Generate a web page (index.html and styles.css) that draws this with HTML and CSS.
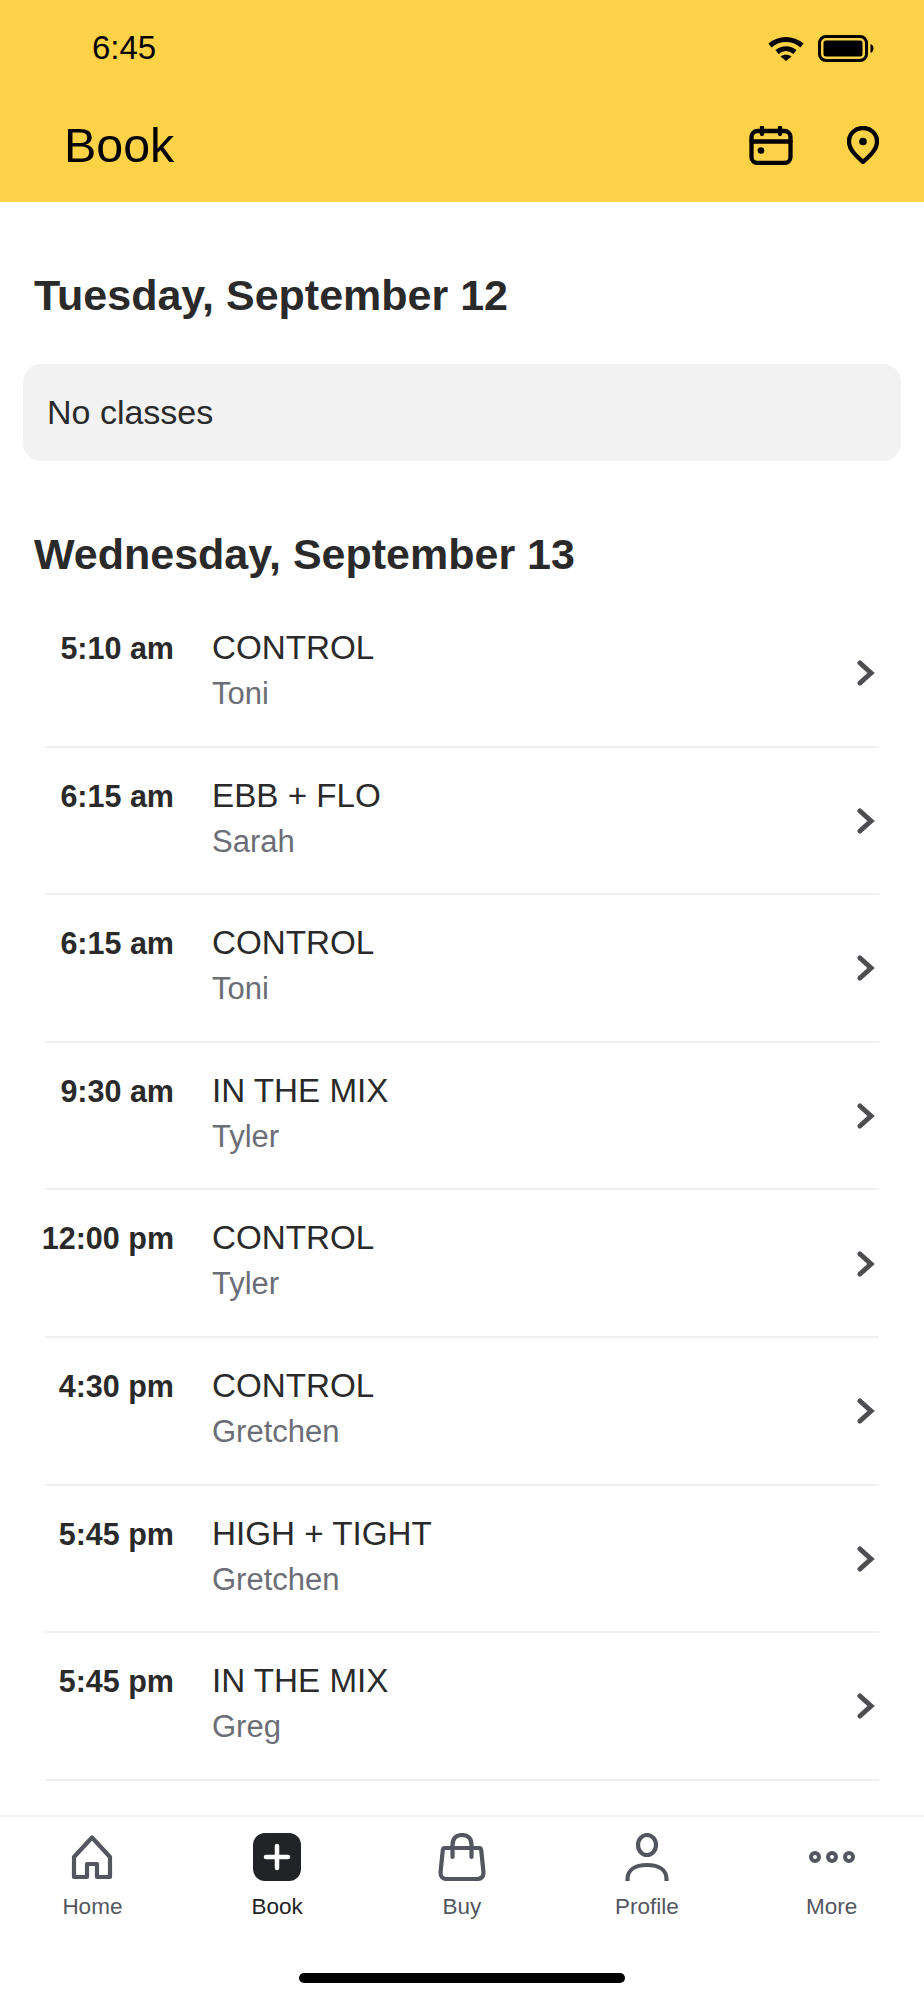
FILE: index.html
```html
<!DOCTYPE html>
<html lang="en">
<head>
<meta charset="utf-8">
<title>Book</title>
<link rel="stylesheet" href="styles.css">
</head>
<body>
<div class="app">
  <header class="header">
    <div class="status">
      <span class="clock">6:45</span>
      <div class="status-icons">
        <svg class="wifi" viewBox="0 0 36 25"><path d="M2 9.500C11.500 1.500 24.500 1.500 34 9.500" class="wifi-arc"/><path d="M9 16C14.500 11.500 21.500 11.500 27 16" class="wifi-arc"/><path d="M12.500 20.500C15.500 18 20.500 18 23.500 20.500L18 25Z" class="wifi-dot"/></svg>
        <svg class="battery" viewBox="0 0 58 27"><rect x="1.500" y="1.500" width="47" height="24" rx="6.500" class="bat-shell"/><rect x="5.500" y="5.500" width="39" height="16" rx="2.500" class="bat-fill"/><path d="M52.500 9C56.500 10 56.500 17 52.500 18Z" class="bat-fill"/></svg>
      </div>
    </div>
    <div class="nav">
      <h1 class="nav-title">Book</h1>
      <div class="nav-icons">
        <svg class="cal" viewBox="0 0 44 39"><rect x="2.500" y="5" width="39" height="32" rx="6" class="ico-black"/><path d="M2.500 15.500H41.500M13 1.500V8M31 1.500V8" class="ico-black"/><circle cx="12" cy="24.500" r="3.300" class="dot-black"/></svg>
        <svg class="pin" viewBox="0 0 32 38"><path d="M16 36C10 30.500 2 24 2 15.500C2 7.500 8.500 2 16 2C23.500 2 30 7.500 30 15.500C30 24 22 30.500 16 36Z" class="ico-black"/><circle cx="16" cy="15.500" r="3.800" class="dot-black"/></svg>
      </div>
    </div>
  </header>

  <main class="content">
    <h2 class="day day-first">Tuesday, September 12</h2>
    <div class="empty">No classes</div>
    <h2 class="day day-second">Wednesday, September 13</h2>
    <ul class="list">
      <li class="row"><span class="time">5:10 am</span><div class="info"><span class="name">CONTROL</span><span class="coach">Toni</span></div><svg class="chev" viewBox="0 0 18 26"><path d="M3 3L14 13L3 23"/></svg></li>
      <li class="row"><span class="time">6:15 am</span><div class="info"><span class="name">EBB + FLO</span><span class="coach">Sarah</span></div><svg class="chev" viewBox="0 0 18 26"><path d="M3 3L14 13L3 23"/></svg></li>
      <li class="row"><span class="time">6:15 am</span><div class="info"><span class="name">CONTROL</span><span class="coach">Toni</span></div><svg class="chev" viewBox="0 0 18 26"><path d="M3 3L14 13L3 23"/></svg></li>
      <li class="row"><span class="time">9:30 am</span><div class="info"><span class="name">IN THE MIX</span><span class="coach">Tyler</span></div><svg class="chev" viewBox="0 0 18 26"><path d="M3 3L14 13L3 23"/></svg></li>
      <li class="row"><span class="time">12:00 pm</span><div class="info"><span class="name">CONTROL</span><span class="coach">Tyler</span></div><svg class="chev" viewBox="0 0 18 26"><path d="M3 3L14 13L3 23"/></svg></li>
      <li class="row"><span class="time">4:30 pm</span><div class="info"><span class="name">CONTROL</span><span class="coach">Gretchen</span></div><svg class="chev" viewBox="0 0 18 26"><path d="M3 3L14 13L3 23"/></svg></li>
      <li class="row"><span class="time">5:45 pm</span><div class="info"><span class="name">HIGH + TIGHT</span><span class="coach">Gretchen</span></div><svg class="chev" viewBox="0 0 18 26"><path d="M3 3L14 13L3 23"/></svg></li>
      <li class="row"><span class="time">5:45 pm</span><div class="info"><span class="name">IN THE MIX</span><span class="coach">Greg</span></div><svg class="chev" viewBox="0 0 18 26"><path d="M3 3L14 13L3 23"/></svg></li>
    </ul>
  </main>

  <nav class="tabs">
    <div class="tab">
      <svg class="tab-ico" viewBox="0 0 48 48"><path d="M24 4.500L6 24V44H19V31H29V44H42V24Z" class="ico-grey"/></svg>
      <span class="tab-label">Home</span>
    </div>
    <div class="tab tab-active">
      <svg class="tab-ico" viewBox="0 0 48 48"><rect width="48" height="48" rx="12" class="plus-box"/><path d="M13 24H35M24 13V35" class="plus-mark"/></svg>
      <span class="tab-label">Book</span>
    </div>
    <div class="tab">
      <svg class="tab-ico" viewBox="0 0 48 48"><path d="M6.500 15H41.500Q43 15 43.200 17L45.500 39.500Q45.500 46 39 46H9Q2.500 46 2.500 39.500L4.800 17Q5 15 6.500 15Z" class="ico-grey"/><path d="M14.500 24V12C14.500 5.500 18 2 24 2C30 2 33.500 5.500 33.500 12V24" class="ico-grey"/></svg>
      <span class="tab-label">Buy</span>
    </div>
    <div class="tab">
      <svg class="tab-ico" viewBox="0 0 48 48"><ellipse cx="24" cy="12" rx="9" ry="10" class="ico-grey"/><path d="M4.500 48V46C4.500 37 12 32 24 32C36 32 43.500 37 43.500 46V48" class="ico-grey plain"/></svg>
      <span class="tab-label">Profile</span>
    </div>
    <div class="tab">
      <svg class="tab-ico" viewBox="0 0 48 48"><circle cx="7" cy="24" r="4" class="ico-grey dots"/><circle cx="24" cy="24" r="4" class="ico-grey dots"/><circle cx="41" cy="24" r="4" class="ico-grey dots"/></svg>
      <span class="tab-label">More</span>
    </div>
  </nav>
  <div class="home-area"><div class="home-bar"></div></div>
</div>
</body>
</html>
```
FILE: styles.css
```css
* { box-sizing: border-box; }
html, body { margin: 0; padding: 0; background: #fff; }
body { font-family: "Liberation Sans", Arial, sans-serif; color: #2a2a2a; }
.app { width: 924px; height: 2000px; display: flex; flex-direction: column; overflow: hidden; }

.header { height: 202px; background: #fdd247; color: #000; flex: none; }
.status { height: 90px; padding: 0 48px 0 92px; display: flex; align-items: center; justify-content: space-between; }
.clock { font-size: 33px; line-height: 1; margin-top: 4px; }
.status-icons { display: flex; align-items: center; gap: 14px; margin-top: 7px; }
.wifi { width: 36px; height: 25px; display: block; }
.wifi-arc { fill: none; stroke: #000; stroke-width: 5; stroke-linecap: butt; }
.wifi-dot { fill: #000; }
.battery { width: 58px; height: 27px; display: block; }
.bat-shell { fill: none; stroke: #000; stroke-width: 3; }
.bat-fill { fill: #000; }
.nav { height: 112px; padding: 0 45px 0 64px; display: flex; align-items: center; justify-content: space-between; }
.nav-title { margin: 0 0 2px; font-size: 48.400px; font-weight: 400; line-height: 1; }
.nav-icons { display: flex; align-items: center; gap: 54px; margin-top: -2px; }
.cal { width: 44px; height: 39px; display: block; }
.pin { width: 32px; height: 38px; display: block; }
.ico-black { fill: none; stroke: #000; stroke-width: 4.300; stroke-linecap: round; stroke-linejoin: round; }
.dot-black { fill: #000; }

.content { flex: 1; min-height: 0; overflow: hidden; padding: 0 23px; }
.day { margin: 0; padding-left: 11px; font-size: 43px; font-weight: 700; line-height: 50px; color: #2a2a2a; }
.day-first { margin-top: 68px; }
.day-second { margin-top: 68px; }
.empty { margin-top: 44px; height: 97px; background: #f2f2f2; border-radius: 18px; padding: 0 24px; display: flex; align-items: center; font-size: 34px; color: #2a2a2a; }
.list { list-style: none; margin: 21px 0 0; padding: 0 22px; }
.row { height: 147.600px; display: flex; align-items: flex-start; border-bottom: 2px solid #f0f0f0; }
.time { width: 139px; margin-left: -10px; flex: none; text-align: right; font-size: 30.500px; font-weight: 700; line-height: 36px; padding-top: 30px; height: 66px; white-space: nowrap; }
.info { flex: 1; display: flex; flex-direction: column; margin-left: 38px; padding-top: 27px; }
.name { font-size: 33.200px; line-height: 42px; color: #2a2a2a; }
.coach { font-size: 31px; line-height: 36px; color: #6b6e76; margin-top: 7px; }
.chev { width: 18px; height: 26px; flex: none; align-self: center; margin-right: 4px; margin-top: 1px; }
.chev path { fill: none; stroke: #4d4d52; stroke-width: 5; stroke-linecap: round; stroke-linejoin: miter; }

.tabs { flex: none; height: 126px; border-top: 2px solid #f3f3f3; display: grid; grid-template-columns: repeat(5, 1fr); padding-top: 16px; }
.tab { display: flex; flex-direction: column; align-items: center; }
.tab-ico { width: 48px; height: 48px; display: block; }
.tab-label { margin-top: 12px; font-size: 22.500px; line-height: 28px; color: #54565f; }
.tab-active .tab-label { color: #222327; }
.ico-grey { fill: none; stroke: #54565f; stroke-width: 4.200; stroke-linecap: round; stroke-linejoin: round; }
.plain { stroke-linecap: butt; }
.dots { stroke-width: 4; }
.plus-box { fill: #222327; }
.plus-mark { fill: none; stroke: #fff; stroke-width: 4.500; stroke-linecap: round; }
.home-area { flex: none; height: 59px; display: flex; justify-content: center; padding-top: 32px; }
.home-bar { width: 326px; height: 10px; border-radius: 5px; background: #000; }
```
